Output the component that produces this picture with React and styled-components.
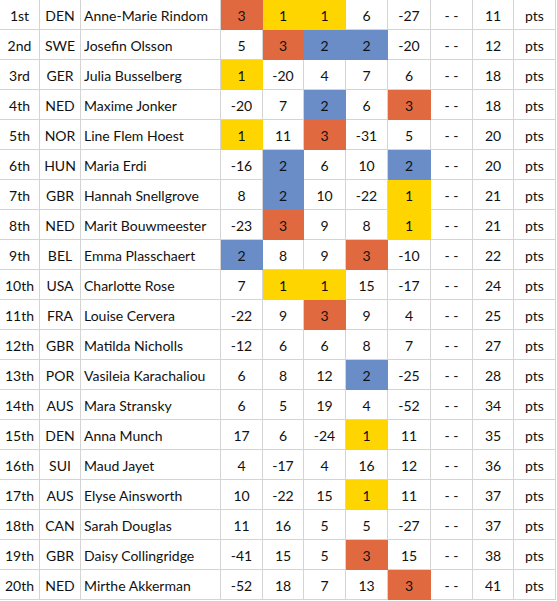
import React from 'react'
import styled, { createGlobalStyle } from "styled-components";

const GlobalStyle = createGlobalStyle`
  body {
    margin: 0;
    background: #ffffff;
  }
`;

const fills = {
  1: "#ffd500",
  2: "#6a8dc8",
  3: "#e0693f",
};

const Table = styled.div`
  display: grid;
  grid-template-columns: 40px 41px 140px 42px 41px 42px 42px 43px 42px 41px 42px;
  font-family: Lato, "Liberation Sans", sans-serif;
  font-size: 14px;
  color: #111;
  width: 556px;
`;

const Cell = styled.div`
  display: flex;
  align-items: center;
  justify-content: ${p => (p.$left ? "flex-start" : "center")};
  padding: 2px ${p => (p.$left ? "3px" : "0")} 0;
  box-sizing: border-box;
  height: 30px;
  border-right: 1px solid ${p => p.$fill || "#d4d4d4"};
  border-bottom: 1px solid ${p => p.$fill || "#d4d4d4"};
  background: ${p => p.$fill || "transparent"};
  white-space: nowrap;
  overflow: hidden;
`;

const standings = [
  ["1st", "DEN", "Anne-Marie Rindom", [3, 1, 1, 6, -27], 11],
  ["2nd", "SWE", "Josefin Olsson", [5, 3, 2, 2, -20], 12],
  ["3rd", "GER", "Julia Busselberg", [1, -20, 4, 7, 6], 18],
  ["4th", "NED", "Maxime Jonker", [-20, 7, 2, 6, 3], 18],
  ["5th", "NOR", "Line Flem Hoest", [1, 11, 3, -31, 5], 20],
  ["6th", "HUN", "Maria Erdi", [-16, 2, 6, 10, 2], 20],
  ["7th", "GBR", "Hannah Snellgrove", [8, 2, 10, -22, 1], 21],
  ["8th", "NED", "Marit Bouwmeester", [-23, 3, 9, 8, 1], 21],
  ["9th", "BEL", "Emma Plasschaert", [2, 8, 9, 3, -10], 22],
  ["10th", "USA", "Charlotte Rose", [7, 1, 1, 15, -17], 24],
  ["11th", "FRA", "Louise Cervera", [-22, 9, 3, 9, 4], 25],
  ["12th", "GBR", "Matilda Nicholls", [-12, 6, 6, 8, 7], 27],
  ["13th", "POR", "Vasileia Karachaliou", [6, 8, 12, 2, -25], 28],
  ["14th", "AUS", "Mara Stransky", [6, 5, 19, 4, -52], 34],
  ["15th", "DEN", "Anna Munch", [17, 6, -24, 1, 11], 35],
  ["16th", "SUI", "Maud Jayet", [4, -17, 4, 16, 12], 36],
  ["17th", "AUS", "Elyse Ainsworth", [10, -22, 15, 1, 11], 37],
  ["18th", "CAN", "Sarah Douglas", [11, 16, 5, 5, -27], 37],
  ["19th", "GBR", "Daisy Collingridge", [-41, 15, 5, 3, 15], 38],
  ["20th", "NED", "Mirthe Akkerman", [-52, 18, 7, 13, 3], 41],
];

const App = () => {
  return (
    <>
      <GlobalStyle />
      <Table>
        {standings.map(([rank, nation, name, races, total]) => (
          <React.Fragment key={rank}>
            <Cell>{rank}</Cell>
            <Cell>{nation}</Cell>
            <Cell $left>{name}</Cell>
            {races.map((r, i) => (
              <Cell key={i} $fill={fills[r]}>{r}</Cell>
            ))}
            <Cell>- -</Cell>
            <Cell>{total}</Cell>
            <Cell>pts</Cell>
          </React.Fragment>
        ))}
      </Table>
    </>
  );
};

export default App;
